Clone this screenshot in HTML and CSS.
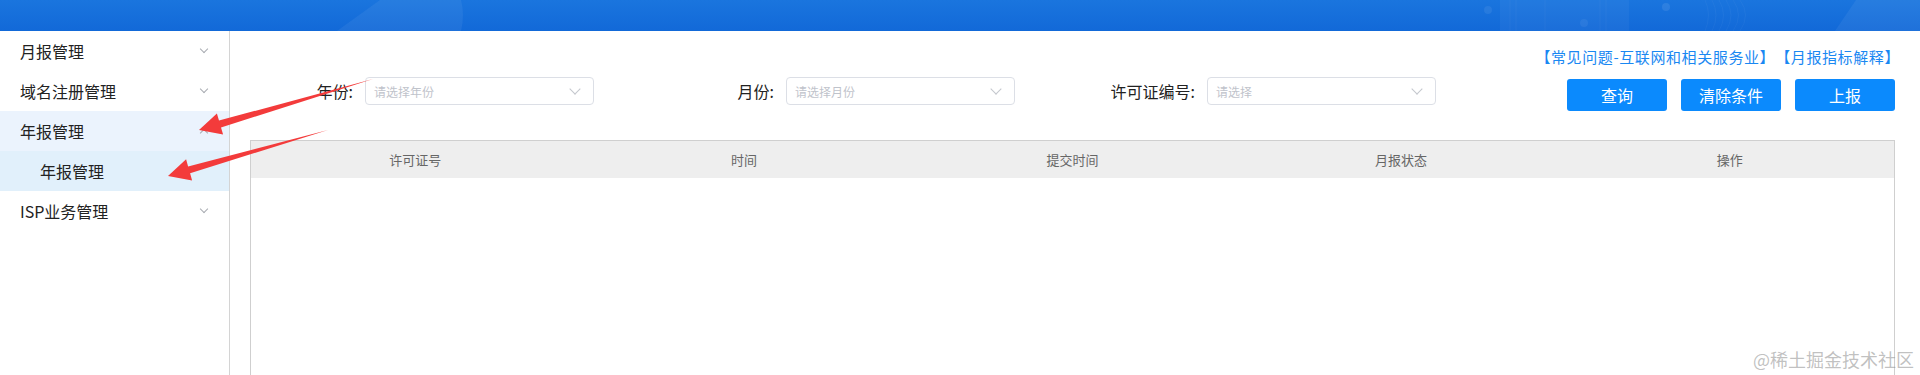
FILE: index.html
```html
<!DOCTYPE html>
<html lang="zh-CN">
<head>
<meta charset="utf-8">
<title>年报管理</title>
<link rel="stylesheet" href="styles.css">
</head>
<body>
<header class="topbar">
  <svg class="topbar-deco" width="1920" height="31" viewBox="0 0 1920 31">
    <path d="M337 31 L380 0 L461 0 Q465 15 461 31 Z" fill="rgba(255,255,255,0.06)"/>
    <rect x="1500" y="0" width="129" height="31" fill="rgba(255,255,255,0.04)"/>
    <g stroke="rgba(255,255,255,0.04)" stroke-width="1">
      <line x1="1510" y1="0" x2="1510" y2="31"/><line x1="1516" y1="0" x2="1516" y2="31"/>
      <line x1="1545" y1="0" x2="1545" y2="31"/><line x1="1600" y1="0" x2="1600" y2="31"/>
      <line x1="1606" y1="0" x2="1606" y2="31"/>
    </g>
    <circle cx="1488" cy="10" r="4" fill="rgba(255,255,255,0.07)"/>
    <circle cx="1666" cy="7" r="4" fill="rgba(255,255,255,0.09)"/>
    <circle cx="1584" cy="23" r="4" fill="rgba(255,255,255,0.06)"/>
    <g fill="none" stroke="rgba(255,255,255,0.04)" stroke-width="1">
      <path d="M1705 0 Q1712 15 1705 31"/><path d="M1712 0 Q1720 15 1712 31"/>
      <path d="M1719 0 Q1728 15 1719 31"/><path d="M1726 0 Q1736 15 1726 31"/>
      <path d="M1733 0 Q1744 15 1733 31"/><path d="M1740 0 Q1751 15 1740 31"/>
    </g>
    <path d="M1835 31 L1856 0 L1920 0 L1920 31 Z" fill="rgba(255,255,255,0.06)"/>
  </svg>
</header>
<div class="layout">
  <aside class="sidebar">
    <div class="menu-item"><span>月报管理</span><i class="chev down"></i></div>
    <div class="menu-item"><span>域名注册管理</span><i class="chev down"></i></div>
    <div class="menu-item open"><span>年报管理</span><i class="chev up"></i></div>
    <div class="menu-item sub active"><span>年报管理</span></div>
    <div class="menu-item"><span>ISP业务管理</span><i class="chev down"></i></div>
  </aside>
  <main class="main">
    <div class="toolbar">
      <div class="filters">
        <div class="form-item">
          <label class="form-label">年份:</label>
          <div class="select"><span class="placeholder">请选择年份</span><i class="chev down sel"></i></div>
        </div>
        <div class="form-item">
          <label class="form-label">月份:</label>
          <div class="select"><span class="placeholder">请选择月份</span><i class="chev down sel"></i></div>
        </div>
        <div class="form-item">
          <label class="form-label">许可证编号:</label>
          <div class="select"><span class="placeholder">请选择</span><i class="chev down sel"></i></div>
        </div>
      </div>
      <div class="actions">
        <div class="links"><a class="link">【常见问题-互联网和相关服务业】</a><a class="link">【月报指标解释】</a></div>
        <div class="buttons">
          <button class="btn">查询</button>
          <button class="btn">清除条件</button>
          <button class="btn">上报</button>
        </div>
      </div>
    </div>
    <div class="table">
      <div class="thead">
        <div class="th">许可证号</div>
        <div class="th">时间</div>
        <div class="th">提交时间</div>
        <div class="th">月报状态</div>
        <div class="th">操作</div>
      </div>
      <div class="tbody"></div>
    </div>
  </main>
</div>
<svg class="annot" width="1920" height="375" viewBox="0 0 1920 375">
  <path d="M373 79 L219 120.6 L216.9 113.4 L199 130 L223.1 134.6 L221 127.4 Z" fill="#f33b3b"/>
  <path d="M328 130 L188.1 166.5 L186.1 159.3 L168 176 L192.1 180.5 L190.1 173.3 Z" fill="#f33b3b"/>
</svg>
<div class="watermark">@稀土掘金技术社区</div>
</body>
</html>
```

FILE: styles.css
```css
* { box-sizing: border-box; }
html, body {
  margin: 0;
  padding: 0;
  height: 375px;
  overflow: hidden;
  background: #fff;
  font-family: "Noto Sans CJK SC", "Noto Sans", sans-serif;
  color: #222;
}
.topbar {
  height: 31px;
  background: linear-gradient(180deg, #1a75de 0%, #1269d8 100%);
  overflow: hidden;
}
.topbar-deco { display: block; }
.layout {
  display: flex;
  height: 344px;
}
.sidebar {
  width: 230px;
  flex: none;
  border-right: 1px solid #d4d4d4;
}
.menu-item {
  height: 40px;
  display: flex;
  align-items: center;
  justify-content: space-between;
  padding: 0 22px 0 20px;
  font-size: 16px;
  line-height: 40px;
  color: #222;
}
.menu-item.open { background: #ebf3fd; }
.menu-item.sub { padding-left: 40px; background: #e1f0fb; }
.chev {
  display: block;
  width: 6px;
  height: 6px;
  border-right: 1px solid #a9acb2;
  border-bottom: 1px solid #a9acb2;
}
.chev.down { transform: rotate(45deg); margin-top: -4px; }
.chev.up { transform: rotate(-135deg); margin-top: 4px; }
.main {
  flex: 1;
  padding: 0 25px 0 20px;
  min-width: 0;
}
.toolbar {
  display: flex;
  justify-content: space-between;
  align-items: flex-start;
}
.filters {
  display: flex;
  padding-top: 46px;
}
.form-item {
  display: flex;
  align-items: center;
  margin-right: 77px;
}
.form-label {
  box-sizing: content-box;
  width: 103px;
  padding-right: 12px;
  text-align: right;
  font-size: 16px;
  color: #222;
}
.select {
  width: 229px;
  height: 28px;
  border: 1px solid #dcdfe6;
  border-radius: 4px;
  display: flex;
  align-items: center;
  justify-content: space-between;
  padding: 0 14px 0 8px;
}
.placeholder {
  font-size: 12px;
  color: #bfc3cb;
}
.chev.sel {
  width: 8px;
  height: 8px;
  border-color: #c4c7cd;
}
.actions {
  display: flex;
  flex-direction: column;
  align-items: flex-end;
  padding-top: 16px;
}
.links {
  display: flex;
  font-size: 15px;
  line-height: 20px;
  letter-spacing: 0.6px;
  margin-right: -5px;
}
.link {
  color: #1a88f2;
  text-decoration: none;
}
.buttons {
  display: flex;
  gap: 14px;
  margin-top: 12px;
}
.btn {
  width: 100px;
  height: 32px;
  border: none;
  border-radius: 3px;
  background: #0b8afd;
  color: #fff;
  font-family: inherit;
  font-size: 16px;
  padding: 0;
}
.table {
  margin-top: 29px;
  border: 1px solid #cfcfcf;
  border-bottom: none;
}
.thead {
  display: grid;
  grid-template-columns: repeat(5, 1fr);
  background: #eeeeee;
  height: 37px;
}
.th {
  display: flex;
  align-items: center;
  justify-content: center;
  font-size: 13px;
  color: #666;
}
.tbody { height: 300px; }
.annot {
  position: absolute;
  left: 0;
  top: 0;
  pointer-events: none;
}
.watermark {
  position: absolute;
  right: 6px;
  top: 347px;
  font-size: 18px;
  line-height: 24px;
  color: rgba(140, 140, 140, 0.55);
}
```
